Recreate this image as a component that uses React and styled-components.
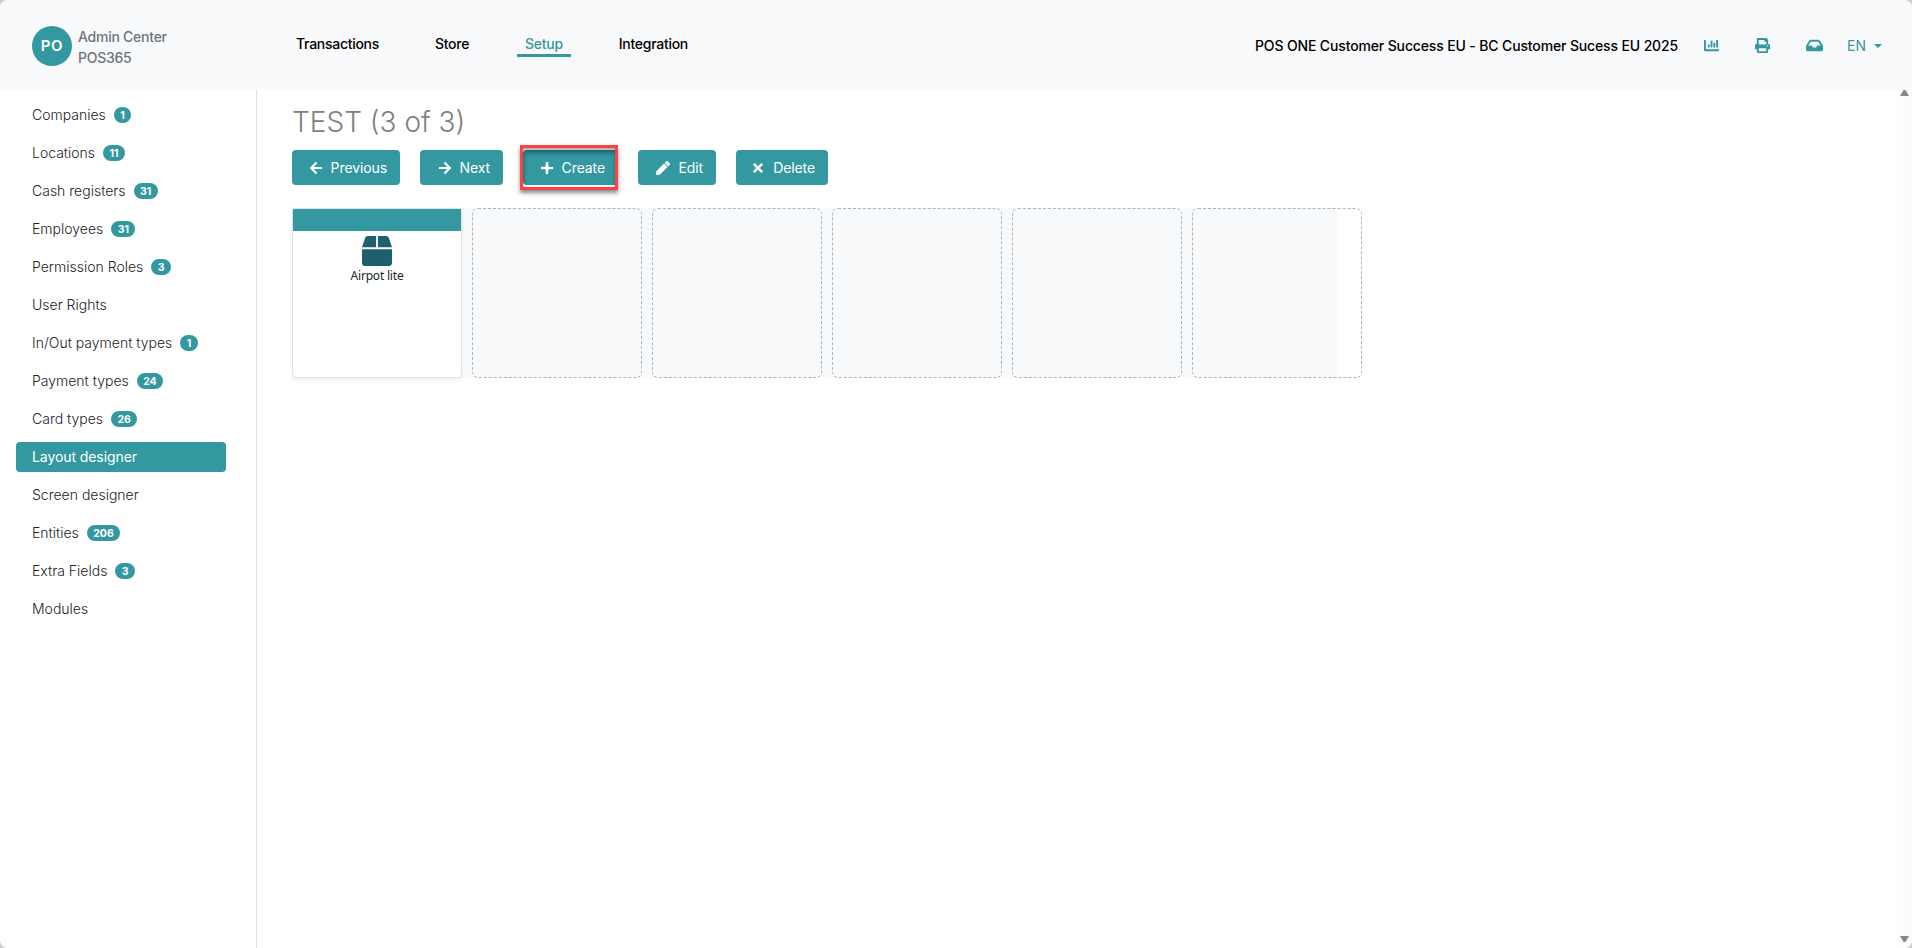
import React from "react";
import styled, { createGlobalStyle } from "styled-components";
import {
  FaArrowLeft,
  FaArrowRight,
  FaPlus,
  FaPen,
  FaTimes,
  FaBox,
  FaPrint,
  FaInbox,
  FaChartBar,
} from "react-icons/fa";

const teal = "#3398a0";

const GlobalStyle = createGlobalStyle`
  * {
    box-sizing: border-box;
  }

  body {
    margin: 0;
    background: #d0d0d0;
    font-family: Inter, "Liberation Sans", sans-serif;
    font-size: 14px;
    color: #212529;
  }
`;

const Page = styled.div`
  height: 948px;
  display: flex;
  flex-direction: column;
  background: #fff;
  border-radius: 8px;
  overflow: hidden;
`;

const Header = styled.header`
  height: 90px;
  flex: none;
  display: flex;
  align-items: center;
  padding: 0 30px 0 32px;
  background: #f8f9fb;
`;

const Brand = styled.div`
  width: 256px;
  display: flex;
  align-items: center;
  gap: 6px;
  padding-top: 2px;
  color: #6c757d;
  line-height: 21px;
  font-weight: 500;
  letter-spacing: -0.25px;
`;

const BrandName = styled.div`
  padding-top: 2px;
`;

const Avatar = styled.div`
  width: 40px;
  height: 40px;
  border-radius: 50%;
  background: ${teal};
  color: #fff;
  font-size: 15px;
  font-weight: 600;
  letter-spacing: 0.6px;
  line-height: 39px;
  text-align: center;
`;

const TopNav = styled.nav`
  display: flex;
  gap: 40px;
  padding-top: 1px;
`;

const TopLink = styled.a`
  padding: 0 8px;
  color: ${({ $active }) => ($active ? teal : "#000")};
  border-bottom: 3px solid ${({ $active }) => ($active ? teal : "transparent")};
  font-weight: 500;
  line-height: 20px;
  letter-spacing: -0.28px;
`;

const Tools = styled.div`
  margin-left: auto;
  padding-top: 1px;
  display: flex;
  align-items: center;
  color: ${teal};

  svg {
    display: block;
  }
`;

const Tenant = styled.span`
  color: #000;
  font-weight: 500;
  letter-spacing: -0.14px;
  margin-right: 25px;
`;

const ToolButton = styled.span`
  width: 17px;
  margin-right: ${({ $gap }) => $gap}px;
  display: flex;
  justify-content: center;
`;

const Language = styled.span`
  display: flex;
  align-items: center;
  gap: 8px;
`;

const Body = styled.div`
  flex: 1;
  min-height: 0;
  display: flex;
`;

const Sidebar = styled.aside`
  width: 257px;
  flex: none;
  display: flex;
  flex-direction: column;
  gap: 8px;
  padding: 10px 30px 0 16px;
  border-right: 1px solid #dee2e6;
`;

const SideItem = styled.a`
  height: 30px;
  display: flex;
  align-items: center;
  gap: 8px;
  padding: 0 16px 2px;
  border-radius: 4px;
  font-weight: ${({ $active }) => ($active ? 400 : 300)};
  letter-spacing: ${({ $active }) => ($active ? "-0.08px" : "normal")};
  color: ${({ $active }) => ($active ? "#fff" : "#212529")};
  background: ${({ $active }) => ($active ? teal : "transparent")};
`;

const Badge = styled.span`
  height: 16px;
  margin-top: 2px;
  padding: 0 6.4px;
  border-radius: 8px;
  background: ${teal};
  color: #fff;
  font-size: 10.5px;
  font-weight: 700;
  line-height: 17px;
`;

const Main = styled.main`
  flex: 1;
  padding: 14px 0 0 35px;
`;

const Title = styled.h1`
  margin: 0;
  height: 46px;
  font-size: 28px;
  font-weight: 300;
  line-height: 36px;
  color: #808080;
`;

const Toolbar = styled.div`
  display: flex;
  gap: 20px;
  height: 35px;
`;

const Button = styled.button`
  position: relative;
  width: ${({ $width }) => $width}px;
  height: 35px;
  display: flex;
  align-items: center;
  justify-content: flex-end;
  gap: 8px;
  padding: 0 13px 0 0;
  border: none;
  border-radius: 4px;
  background: ${teal};
  color: #fff;
  font: 400 14px Inter, sans-serif;
  letter-spacing: -0.1px;
  box-shadow: ${({ $pressed }) => ($pressed ? "inset 0 3px 5px rgba(0, 0, 0, 0.3)" : "none")};
`;

const Highlight = styled.span`
  position: absolute;
  inset: -5px 0 -5px -3px;
  border: 3px solid #fb4344;
  box-shadow: 0 3px 4px rgba(0, 0, 0, 0.45), inset 0 2px 3px rgba(0, 0, 0, 0.35);
`;

const Grid = styled.div`
  width: 1046px;
  height: 170px;
  margin-top: 23px;
  display: flex;
  gap: 10px;
  background: #f8f9fb;
`;

const Slot = styled.div`
  width: 170px;
  height: 170px;
  flex: none;
  border: 1px dashed #adb5bd;
  border-radius: 6px;
`;

const Tile = styled(Slot)`
  display: flex;
  flex-direction: column;
  align-items: center;
  border: 1px solid #dee2e6;
  border-radius: 4px;
  background: #fff;
  box-shadow: 0 2px 4px rgba(0, 0, 0, 0.075);
  font-family: "Noto Sans", sans-serif;
  font-size: 12px;
  letter-spacing: -0.2px;

  svg {
    margin: 5px 0 1px;
    color: #1e6070;
  }
`;

const TileBar = styled.div`
  width: 100%;
  height: 22px;
  background: ${teal};
`;

const ScrollTrack = styled.div`
  width: 15px;
  display: flex;
  flex-direction: column;
  justify-content: space-between;
  align-items: center;
  padding: 0 0 6px;
  background: #fcfcfc;

  svg {
    display: block;
  }
`;

const topLinks = ["Transactions", "Store", "Setup", "Integration"];

const sideItems = [
  ["Companies", 1],
  ["Locations", 11],
  ["Cash registers", 31],
  ["Employees", 31],
  ["Permission Roles", 3],
  ["User Rights"],
  ["In/Out payment types", 1],
  ["Payment types", 24],
  ["Card types", 26],
  ["Layout designer"],
  ["Screen designer"],
  ["Entities", 206],
  ["Extra Fields", 3],
  ["Modules"],
];

const App = () => {
  return (
    <>
      <GlobalStyle />
      <Page>
        <Header>
          <Brand>
            <Avatar>PO</Avatar>
            <BrandName>
              Admin Center
              <br />
              POS365
            </BrandName>
          </Brand>
          <TopNav>
            {topLinks.map((label) => (
              <TopLink key={label} $active={label === "Setup"}>{label}</TopLink>
            ))}
          </TopNav>
          <Tools>
            <Tenant>POS ONE Customer Success EU - BC Customer Sucess EU 2025</Tenant>
            <ToolButton $gap={34}><FaChartBar size={15} /></ToolButton>
            <ToolButton $gap={35}><FaPrint size={15} /></ToolButton>
            <ToolButton $gap={24}><FaInbox size={17} /></ToolButton>
            <Language>
              EN
              <svg width="8" height="4" viewBox="0 0 8 4"><path d="M0 0h8L4 4z" fill={teal} /></svg>
            </Language>
          </Tools>
        </Header>
        <Body>
          <Sidebar>
            {sideItems.map(([label, count]) => (
              <SideItem key={label} $active={label === "Layout designer"}>
                {label}
                {count && <Badge>{count}</Badge>}
              </SideItem>
            ))}
          </Sidebar>
          <Main>
            <Title>TEST (3 of 3)</Title>
            <Toolbar>
              <Button $width={108}><FaArrowLeft size={14} /> Previous</Button>
              <Button $width={83}><FaArrowRight size={14} /> Next</Button>
              <Button $width={95} $pressed>
                <FaPlus size={14} /> Create
                <Highlight />
              </Button>
              <Button $width={78}><FaPen size={14} /> Edit</Button>
              <Button $width={92}><FaTimes size={14} /> Delete</Button>
            </Toolbar>
            <Grid>
              <Tile>
                <TileBar />
                <FaBox size={30} />
                Airpot lite
              </Tile>
              {[1, 2, 3, 4, 5].map((n) => (
                <Slot key={n} />
              ))}
            </Grid>
          </Main>
          <ScrollTrack>
            <svg width="9" height="6" viewBox="0 0 9 6"><path d="M3.5 0h2L9 6H0z" fill="#888" /></svg>
            <svg width="9" height="6" viewBox="0 0 9 6"><path d="M0 0h9L5.5 6h-2z" fill="#888" /></svg>
          </ScrollTrack>
        </Body>
      </Page>
    </>
  );
};

export default App;
